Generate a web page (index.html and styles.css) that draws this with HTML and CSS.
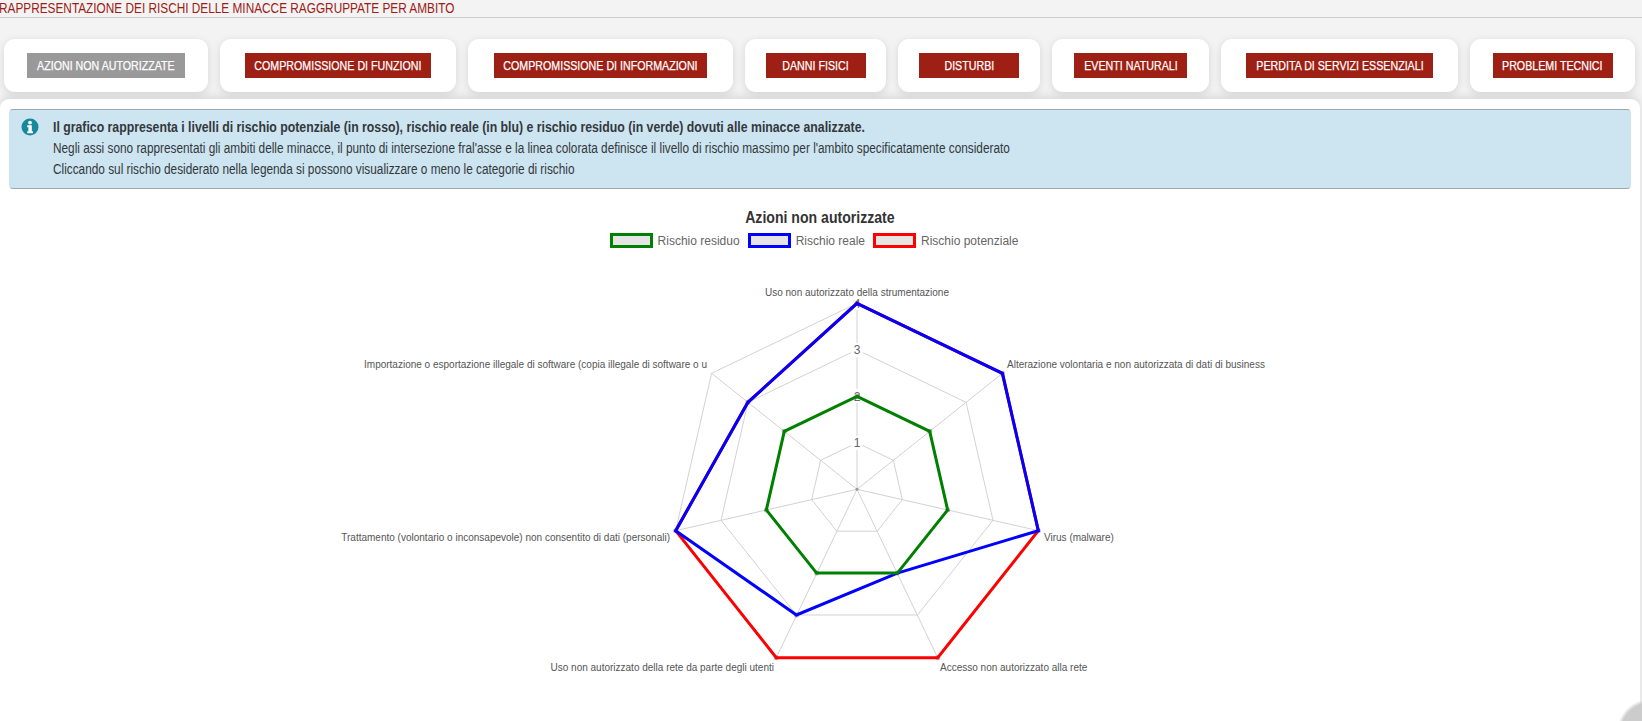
FILE: index.html
```html
<!DOCTYPE html>
<html lang="it">
<head>
<meta charset="utf-8">
<title>Rappresentazione dei rischi</title>
<link rel="stylesheet" href="styles.css">
</head>
<body>
<header class="page-head"><span class="narrow">RAPPRESENTAZIONE DEI RISCHI DELLE MINACCE RAGGRUPPATE PER AMBITO</span></header>
<nav class="tabs">
  <div class="tab-card card-1"><a class="tab tab-1 tab-active"><span>AZIONI NON AUTORIZZATE</span></a></div>
  <div class="tab-card card-2"><a class="tab tab-2"><span>COMPROMISSIONE DI FUNZIONI</span></a></div>
  <div class="tab-card card-3"><a class="tab tab-3"><span>COMPROMISSIONE DI INFORMAZIONI</span></a></div>
  <div class="tab-card card-4"><a class="tab tab-4"><span>DANNI FISICI</span></a></div>
  <div class="tab-card card-5"><a class="tab tab-5"><span>DISTURBI</span></a></div>
  <div class="tab-card card-6"><a class="tab tab-6"><span>EVENTI NATURALI</span></a></div>
  <div class="tab-card card-7"><a class="tab tab-7"><span>PERDITA DI SERVIZI ESSENZIALI</span></a></div>
  <div class="tab-card card-8"><a class="tab tab-8"><span>PROBLEMI TECNICI</span></a></div>
</nav>
<main class="panel">
  <section class="alert">
    <svg class="alert-icon" viewBox="0 0 18 18" aria-hidden="true">
      <circle cx="9" cy="9" r="8.5" fill="#17899c"/>
      <circle cx="9" cy="4.6" r="1.9" fill="#fff"/>
      <path d="M6.2 7.2h4.6v6h1.2v2H6.2v-2h1.2v-4H6.2z" fill="#fff"/>
    </svg>
    <div class="alert-text">
      <p class="alert-strong"><span>Il grafico rappresenta i livelli di rischio potenziale (in rosso), rischio reale (in blu) e rischio residuo (in verde) dovuti alle minacce analizzate.</span></p>
      <p><span>Negli assi sono rappresentati gli ambiti delle minacce, il punto di intersezione fral'asse e la linea colorata definisce il livello di rischio massimo per l'ambito specificatamente considerato</span></p>
      <p><span>Cliccando sul rischio desiderato nella legenda si possono visualizzare o meno le categorie di rischio</span></p>
    </div>
  </section>
  <h2 class="chart-title"><span>Azioni non autorizzate</span></h2>
  <ul class="legend">
    <li class="legend-item"><span class="swatch swatch-green"></span>Rischio residuo</li>
    <li class="legend-item"><span class="swatch swatch-blue"></span>Rischio reale</li>
    <li class="legend-item"><span class="swatch swatch-red"></span>Rischio potenziale</li>
  </ul>
  <svg class="radar" viewBox="0 258 1642 463" aria-label="Grafico radar">
    <defs>
      <marker id="dot" markerUnits="userSpaceOnUse" markerWidth="6" markerHeight="6" refX="3" refY="3">
        <circle cx="3" cy="3" r="2.5" fill="#000" fill-opacity=".3"/>
      </marker>
    </defs>
    <g class="grid">
      <polygon points="857,442.8 893.35,460.31 902.33,499.65 877.18,531.2 836.82,531.2 811.67,499.65 820.65,460.31"/>
      <polygon points="857,396.3 929.71,431.31 947.67,509.99 897.35,573.09 816.65,573.09 766.33,509.99 784.29,431.31"/>
      <polygon points="857,349.8 966.06,402.32 993,520.34 917.53,614.99 796.47,614.99 721,520.34 747.94,402.32"/>
      <polygon points="857,303.3 1002.41,373.33 1038.33,530.69 937.71,657.7 776.29,657.7 675.67,530.69 711.59,373.33"/>
      <path d="M857 489.3L857 303.3M857 489.3L1002.41 373.33M857 489.3L1038.33 530.69M857 489.3L937.71 657.7M857 489.3L776.29 657.7M857 489.3L675.67 530.69M857 489.3L711.59 373.33"/>
    </g>
    <circle class="hub" cx="857" cy="489.3" r="1.5"/>
    <g class="ticks">
      <rect x="851" y="436" width="12" height="14"/>
      <rect x="851" y="389" width="12" height="14"/>
      <rect x="851" y="343" width="12" height="14"/>
      <rect x="851" y="296" width="12" height="14"/>
      <text x="857" y="447">1</text>
      <text x="857" y="401">2</text>
      <text x="857" y="354">3</text>
      <text x="857" y="308">4</text>
    </g>
    <g class="labels">
      <text x="857" y="296" class="mid">Uso non autorizzato della strumentazione</text>
      <text x="1007" y="368">Alterazione volontaria e non autorizzata di dati di business</text>
      <text x="1044" y="541">Virus (malware)</text>
      <text x="940" y="671">Accesso non autorizzato alla rete</text>
      <text x="774" y="671" class="end">Uso non autorizzato della rete da parte degli utenti</text>
      <text x="670" y="541" class="end">Trattamento (volontario o inconsapevole) non consentito di dati (personali)</text>
      <text x="707" y="368" class="end">Importazione o esportazione illegale di software (copia illegale di software o u</text>
    </g>
    <polyline class="dots" points="857,303.3 1002.41,373.33 1038.33,530.69 937.71,657.7 776.29,657.7 675.67,530.69 747.94,402.32 857,396.3 929.71,431.31 947.67,509.99 897.35,573.09 816.65,573.09 766.33,509.99 784.29,431.31 796.47,614.99"/>
    <polygon class="line line-red" points="857,303.3 1002.41,373.33 1038.33,530.69 937.71,657.7 776.29,657.7 675.67,530.69 747.94,402.32"/>
    <polygon class="line line-blue" points="857,303.3 1002.41,373.33 1038.33,530.69 897.35,573.09 796.47,614.99 675.67,530.69 747.94,402.32"/>
    <polygon class="line line-green" points="857,396.3 929.71,431.31 947.67,509.99 897.35,573.09 816.65,573.09 766.33,509.99 784.29,431.31"/>
  </svg>
</main>
<div class="corner-fab"></div>
</body>
</html>
```

FILE: styles.css
```css
html, body {
  margin: 0;
  height: 721px;
  overflow: hidden;
}
body {
  background: #f3f3f3;
  font-family: "Liberation Sans", sans-serif;
  position: relative;
}
.page-head {
  box-sizing: border-box;
  height: 18px;
  line-height: 16px;
  border-bottom: 1px solid #ccc;
  font-size: 14px;
  color: #9e2014;
  white-space: nowrap;
}
.narrow {
  display: inline-block;
  margin-left: -1px;
  transform: scaleX(.844);
  transform-origin: left center;
}
.tabs {
  display: flex;
  gap: 12px;
  padding: 21px 0 0 4px;
  height: 53px;
}
.tab-card {
  box-sizing: border-box;
  height: 53px;
  background: #fff;
  border-radius: 11px;
  box-shadow: 0 2px 8px rgba(0,0,0,.12);
  padding-top: 14px;
  display: flex;
  justify-content: center;
}
.card-1 { width: 204px; }
.card-2 { width: 236px; }
.card-3 { width: 265px; }
.card-4 { width: 141px; }
.card-5 { width: 142px; }
.card-6 { width: 157px; }
.card-7 { width: 237px; }
.card-8 { width: 165px; }
.tab {
  height: 25px;
  display: flex;
  justify-content: center;
  align-items: center;
  font-size: 13px;
  color: #fff;
  background: #9e2014;
  white-space: nowrap;
  -webkit-text-stroke: .25px #fff;
}
.tab span {
  flex: none;
  transform: scaleX(.82);
}
.tab-1 { width: 158px; }
.tab-2 { width: 186px; }
.tab-3 { width: 213px; }
.tab-4 { width: 100px; }
.tab-5 { width: 100px; }
.tab-6 { width: 113px; }
.tab-7 { width: 187px; }
.tab-8 { width: 120px; }
.tab-active { background: #999; }
.panel {
  margin-top: 7px;
  height: 622px;
  background: #fff;
  border-radius: 9px 9px 0 0;
  box-shadow: 0 -3px 8px rgba(0,0,0,.1);
  padding-top: 10px;
  box-sizing: border-box;
  margin-right: 2px;
}
.alert {
  box-sizing: border-box;
  display: flex;
  gap: 14px;
  height: 80px;
  margin: 0 9px;
  padding: 7px 0 0 11px;
  background: #cde4f1;
  border: 1px solid #cde4f1;
  border-top-color: #a0a8ae;
  border-bottom-color: #a0a8ae;
  border-radius: 4px;
  color: #33383b;
}
.alert-icon {
  width: 18px;
  height: 18px;
  flex: none;
  margin-top: 1px;
}
.alert-text p {
  margin: 0;
  font-size: 14px;
  line-height: 21px;
  white-space: nowrap;
}
.alert-text span {
  display: inline-block;
  transform: scaleX(.844);
  transform-origin: left center;
}
.alert-text .alert-strong { font-weight: bold; }
.alert-text .alert-strong span { transform: scaleX(.877); }
.chart-title {
  margin: 19px 0 0;
  text-align: center;
  font-size: 16px;
  line-height: 20px;
  font-weight: bold;
  color: #333;
}
.chart-title span {
  display: inline-block;
  transform: scaleX(.88);
}
.legend {
  list-style: none;
  display: flex;
  justify-content: center;
  gap: 8px;
  margin: 4px 12px 0 0;
  padding: 0;
  height: 17px;
}
.legend-item {
  display: flex;
  align-items: center;
  gap: 5px;
  font-size: 12px;
  color: #666;
}
.swatch {
  box-sizing: border-box;
  width: 43px;
  height: 15px;
  background: #e5e5e5;
  border: 3px solid;
}
.swatch-green { border-color: #008000; }
.swatch-blue { border-color: #0000ff; }
.swatch-red { border-color: #ff0000; }
.radar {
  display: block;
  position: absolute;
  left: 0;
  top: 258px;
  width: 1642px;
  height: 463px;
}
.grid polygon, .grid path {
  fill: none;
  stroke: #d2d2d2;
  stroke-width: 1;
}
.hub { fill: #999; }
.ticks rect { fill: #fff; }
.ticks text {
  font-size: 12px;
  fill: #666;
  text-anchor: middle;
}
.labels text {
  font-size: 10px;
  fill: #555;
}
.labels .mid { text-anchor: middle; }
.labels .end { text-anchor: end; }
.dots {
  fill: none;
  stroke: none;
  marker: url(#dot);
}
.line {
  fill: none;
  stroke-width: 3;
  stroke-linejoin: miter;
}
.line-red { stroke: #ff0000; }
.line-blue { stroke: #0000ff; }
.line-green { stroke: #008000; }
.corner-fab {
  position: absolute;
  left: 1612px;
  top: 693px;
  width: 30px;
  height: 28px;
  background: radial-gradient(circle 32px at 38px 39px, #ccc 29px, rgba(204,204,204,0) 33px);
}
```
